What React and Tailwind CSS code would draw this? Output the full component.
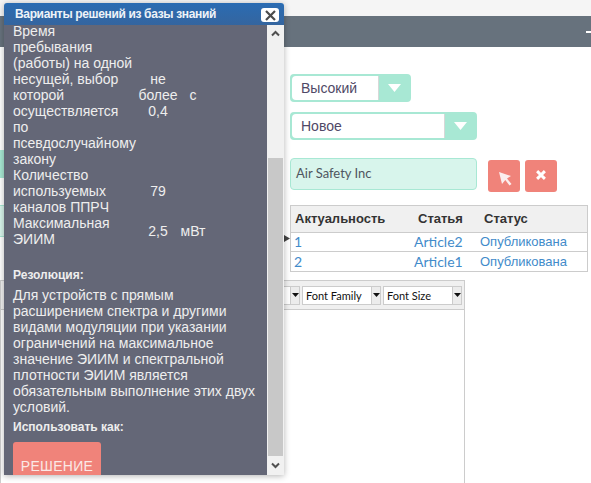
import React from "react";

const arial = { fontFamily: '"Liberation Sans", Arial, sans-serif' };

const Caret = () => (
  <svg width="7" height="4" viewBox="0 0 7 4" className="block">
    <path d="M0 0h7L3.5 4z" fill="#111" />
  </svg>
);

const Dropdown = ({ label, width, arrow }) => (
  <div className={`flex h-7 ${width} rounded border-2 border-[#a8e8d4] bg-[#a8e8d4]`} style={arial}>
    <div className="flex flex-1 items-center rounded-l-sm border-r border-[#d8d8d8] bg-white pl-[9px] text-[14px] text-[#4f4866]">
      {label}
    </div>
    <div className={`flex ${arrow} items-center justify-center`}>
      <svg width="13" height="8" viewBox="0 0 13 8">
        <path d="M0 0h13L6.5 8z" fill="#fff" />
      </svg>
    </div>
  </div>
);

const ToolSelect = ({ label, width }) => (
  <div className={`flex h-[19px] ${width} border border-[#ccc] bg-white text-[11px] leading-[17px] text-[#111]`}>
    <div className="flex-1 overflow-hidden pl-[3px] whitespace-nowrap">{label}</div>
    <div className="flex w-[9px] items-center justify-center border-l border-[#ccc] bg-[#ececec]">
      <Caret />
    </div>
  </div>
);

const rows = [
  { n: "1", article: "Article2" },
  { n: "2", article: "Article1" },
];

const Modal = () => (
  <div className="absolute top-[3px] left-[4px] flex h-[472px] w-[280px] flex-col overflow-hidden rounded-t-[3px] shadow-[0_1px_6px_rgba(0,0,0,0.3)]" style={arial}>
    <div className="flex h-[22px] shrink-0 items-center justify-between bg-gradient-to-b from-[#2a6cb3] to-[#34659f] pr-[5px] pl-[11px]">
      <span className="text-[12px] font-bold tracking-[-0.35px] text-[#eef3f8]">Варианты решений из базы знаний</span>
      <button className="mt-[2px] flex h-[14px] w-[18px] items-center justify-center rounded-[3px] bg-white">
        <svg width="11" height="11" viewBox="0 0 11 11">
          <path d="M1 1l9 9M10 1l-9 9" stroke="#4b4b4b" strokeWidth="2.2" />
        </svg>
      </button>
    </div>
    <div className="flex min-h-0 flex-1">
      <div className="flex-1 overflow-hidden bg-[#646777] pl-[9px] text-[14px] leading-[16px] text-[#eeeeee]">
        <div className="-mt-[2px] grid grid-cols-[125px_40px_30px] items-center">
          <div>
            Время<br />пребывания<br />(работы) на одной<br />несущей, выбор<br />которой<br />осуществляется<br />по<br />псевдослучайному<br />закону
          </div>
          <div className="text-center">не<br />более<br />0,4</div>
          <div className="text-center">с</div>
          <div>Количество<br />используемых<br />каналов ППРЧ</div>
          <div className="text-center">79</div>
          <div />
          <div>Максимальная<br />ЭИИМ</div>
          <div className="text-center">2,5</div>
          <div className="text-center">мВт</div>
        </div>
        <div className="mt-[20px] text-[12px] font-bold">Резолюция:</div>
        <p className="mt-[4px] w-[248px]">
          Для устройств с прямым расширением спектра и другими видами модуляции при указании ограничений на максимальное значение ЭИИМ и спектральной плотности ЭИИМ является обязательным выполнение этих двух условий.
        </p>
        <div className="mt-[4px] text-[12px] font-bold">Использовать как:</div>
        <button className="mt-[7px] h-[40px] w-[88px] rounded-[3px] bg-[#f0837a] pt-[7px] text-[14px] tracking-[0.3px] text-[#fbe9e6]">
          РЕШЕНИЕ
        </button>
      </div>
      <div className="flex w-[17px] flex-col bg-[#f1f1f1]">
        <div className="flex h-[17px] items-center justify-center">
          <svg width="9" height="7" viewBox="0 0 9 7">
            <path d="M1 5.5l3.5-3.5L8 5.5" fill="none" stroke="#505050" strokeWidth="2" />
          </svg>
        </div>
        <div className="mt-[116px] ml-[1px] h-[298px] w-[15px] bg-[#c8c8c8]" />
        <div className="flex flex-1 items-center justify-center">
          <svg width="9" height="7" viewBox="0 0 9 7">
            <path d="M1 1.5l3.5 3.5L8 1.5" fill="none" stroke="#505050" strokeWidth="2" />
          </svg>
        </div>
      </div>
    </div>
  </div>
);

export default function App() {
  return (
    <div
      className="relative h-[483px] w-[591px] overflow-hidden bg-white"
      style={{ fontFamily: 'Lato, "Liberation Sans", Arial, sans-serif' }}
    >
      <div className="h-4 bg-[#f5f5f5]" />
      <div className="flex h-[31px] items-center justify-end overflow-hidden bg-[#67727d]">
        <div className="-mr-[3px] h-[2px] w-2 bg-white" />
      </div>

      <div className="grid grid-cols-[290px_1fr]">
        <div className="pt-[103px]">
          <div className="h-[28px] w-[4px] bg-[#a8e8d4]" />
          <div className="mt-[27px] h-[32px] w-[4px] border-y border-[#a8e8d4] bg-[#d8f5ec]" />
        </div>
        <div className="pt-[27px]">
          <Dropdown label="Высокий" width="w-[121px]" arrow="w-[30px]" />
          <div className="mt-[10px]">
            <Dropdown label="Новое" width="w-[187px]" arrow="w-[30px]" />
          </div>
          <div className="mt-[18px] flex items-start">
            <div className="flex h-8 w-[187px] items-center rounded border border-[#a8e8d4] bg-[#d8f5ec] pl-[5px] text-[13px] text-[#4f5560]">
              Air Safety Inc
            </div>
            <button className="mt-[2px] ml-[11px] flex h-8 w-8 items-center justify-center rounded-[3px] bg-[#f0837a]">
              <svg width="14" height="15" viewBox="0 0 14 15" className="mt-[4px] ml-[1px]">
                <path d="M1 1l12 4-4 2.4 4.5 5.6-2 1.6-4.2-5.6L4 13z" fill="#fbeeee" />
              </svg>
            </button>
            <button className="mt-[2px] ml-[5px] flex h-8 w-8 items-center justify-center rounded-[3px] bg-[#f0837a]">
              <svg width="10" height="10" viewBox="0 0 9 9" className="-mt-[3px]">
                <path d="M1 1l7 7M8 1L1 8" stroke="#fff" strokeWidth="2.6" />
              </svg>
            </button>
          </div>
          <div className="relative mt-[13px] w-[298px] border border-[#ccc] text-[14px] text-[#428bca]">
            <div className="grid h-[27px] grid-cols-[123px_66px_1fr] items-center border-b border-[#ccc] bg-[#f0f0f0] pl-1 text-[13px] font-bold text-[#333]" style={arial}>
              <span>Актуальность</span>
              <span>Статья</span>
              <span>Статус</span>
            </div>
            {rows.map((r, i) => (
              <div key={r.n} className={`grid h-[19px] grid-cols-[120px_66px_1fr] items-center pl-[3px] leading-[18px] ${i === 0 ? "border-b border-[#ccc]" : ""}`}>
                <span>{r.n}</span>
                <span>{r.article}</span>
                <span className="text-[13px]" style={arial}>Опубликована</span>
              </div>
            ))}
            <svg width="6" height="7" viewBox="0 0 6 7" className="absolute top-[29px] -left-[7px]">
              <path d="M0 0l6 3.5L0 7z" fill="#444" />
            </svg>
          </div>
        </div>
      </div>

      <div className="mt-[8px] h-[220px] w-[465px] border border-[#ccc]">
        <div className="flex h-[29px] items-center justify-end gap-[2px] border-b border-[#ccc] bg-[#f0f0f0] pr-[2px]">
          <ToolSelect label="" width="w-[60px]" />
          <ToolSelect label="Font Family" width="w-[79px]" />
          <ToolSelect label="Font Size" width="w-[79px]" />
        </div>
      </div>

      <Modal />
    </div>
  );
}
